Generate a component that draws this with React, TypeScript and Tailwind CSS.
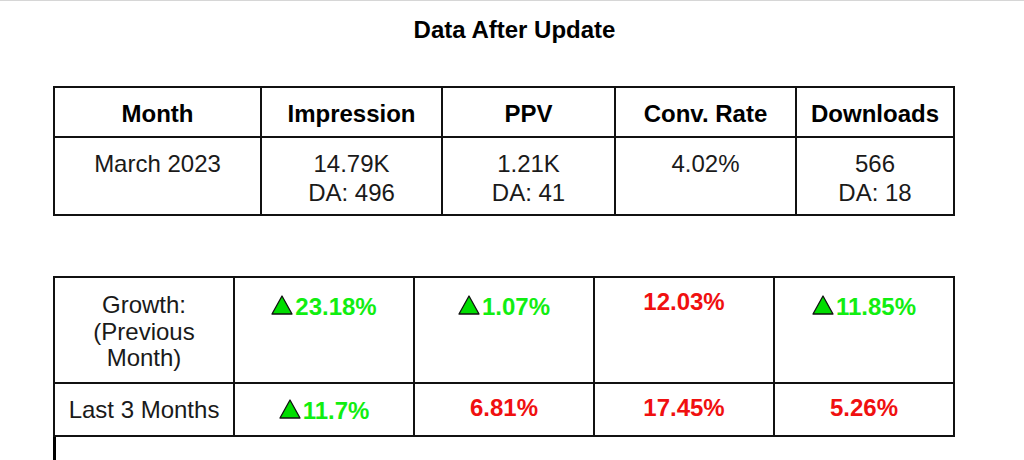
import React from "react";

const font = { fontFamily: '"Liberation Sans", Arial, sans-serif' };

function UpArrow() {
  return (
    <svg width="22" height="20" viewBox="0 0 22 20" className="inline-block align-baseline mr-[2px]">
      <polygon points="11,1 21,19 1,19" fill="#00dd00" stroke="#111" strokeWidth="1.3" strokeLinejoin="round" />
    </svg>
  );
}

function Up({ value }: { value: string }) {
  return (
    <span className="font-bold text-[#11ee11]">
      <UpArrow />
      {value}
    </span>
  );
}

function Down({ value }: { value: string }) {
  return <span className="font-bold text-[#f01010]">{value}</span>;
}

export default function App() {
  const cell = "border-2 border-[#111] text-center";
  return (
    <div className="w-[1024px] h-[460px] overflow-hidden bg-white border-t border-[#d6d6d6] text-[24px] text-[#1a1a1a]" style={font}>
      {/* Title */}
      <h1 className="mt-[16px] text-center font-bold text-black pl-[5px] leading-[26px]">Data After Update</h1>

      {/* Current month table */}
      <table className="mt-[43px] ml-[53px] w-[900px] table-fixed border-collapse">
        <colgroup>
          <col className="w-[207px]" />
          <col className="w-[181px]" />
          <col className="w-[173px]" />
          <col className="w-[181px]" />
          <col className="w-[158px]" />
        </colgroup>
        <thead>
          <tr className="h-[50px]">
            {["Month", "Impression", "PPV", "Conv. Rate", "Downloads"].map((h) => (
              <th key={h} className={`${cell} font-bold text-black align-top pt-[13px] leading-[26px]`}>
                {h}
              </th>
            ))}
          </tr>
        </thead>
        <tbody>
          <tr className="h-[78px]">
            <td className={`${cell} align-top pt-[12px] leading-[28.5px]`}>March 2023</td>
            <td className={`${cell} align-top pt-[12px] leading-[28.5px]`}>
              14.79K
              <br />
              DA: 496
            </td>
            <td className={`${cell} align-top pt-[12px] leading-[28.5px]`}>
              1.21K
              <br />
              DA: 41
            </td>
            <td className={`${cell} align-top pt-[12px] leading-[28.5px]`}>4.02%</td>
            <td className={`${cell} align-top pt-[12px] leading-[28.5px]`}>
              566
              <br />
              DA: 18
            </td>
          </tr>
        </tbody>
      </table>

      {/* Growth table */}
      <table className="mt-[60px] ml-[53px] w-[900px] table-fixed border-collapse">
        <colgroup>
          <col className="w-[180px]" />
          <col className="w-[180px]" />
          <col className="w-[180px]" />
          <col className="w-[180px]" />
          <col className="w-[180px]" />
        </colgroup>
        <tbody>
          <tr className="h-[106px]">
            <td className={`${cell} align-top pt-[14px] leading-[26.5px]`}>
              Growth:
              <br />
              (Previous
              <br />
              Month)
            </td>
            <td className={`${cell} align-top pt-[16px] leading-[26px]`}>
              <Up value="23.18%" />
            </td>
            <td className={`${cell} align-top pt-[16px] leading-[26px]`}>
              <Up value="1.07%" />
            </td>
            <td className={`${cell} align-top pt-[11px] leading-[26px]`}>
              <Down value="12.03%" />
            </td>
            <td className={`${cell} align-top pt-[16px] leading-[26px]`}>
              <Up value="11.85%" />
            </td>
          </tr>
          <tr className="h-[53px]">
            <td className={`${cell} align-middle leading-[26px]`}>Last 3 Months</td>
            <td className={`${cell} align-middle leading-[26px] pt-[2px]`}>
              <Up value="11.7%" />
            </td>
            <td className={`${cell} align-middle leading-[26px] pb-[3px]`}>
              <Down value="6.81%" />
            </td>
            <td className={`${cell} align-middle leading-[26px] pb-[3px]`}>
              <Down value="17.45%" />
            </td>
            <td className={`${cell} align-middle leading-[26px] pb-[3px]`}>
              <Down value="5.26%" />
            </td>
          </tr>
        </tbody>
      </table>

      {/* Text cursor */}
      <div className="ml-[53px] w-[3px] h-[30px] bg-black" />
    </div>
  );
}
